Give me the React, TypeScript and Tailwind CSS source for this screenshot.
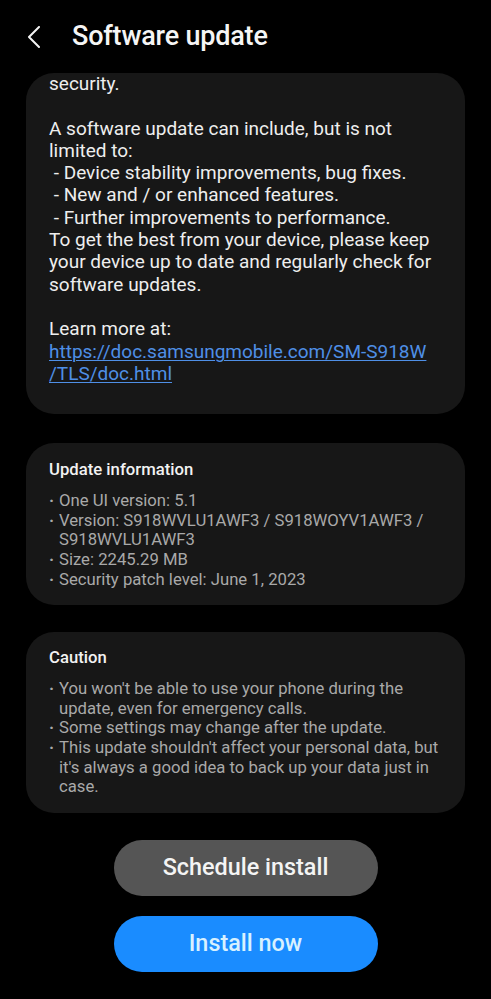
import React from 'react'

const descLines = [
  'security.',
  '',
  'A software update can include, but is not',
  'limited to:',
  ' - Device stability improvements, bug fixes.',
  ' - New and / or enhanced features.',
  ' - Further improvements to performance.',
  'To get the best from your device, please keep',
  'your device up to date and regularly check for',
  'software updates.',
  '',
  'Learn more at:',
]

const updateInfo = [
  'One UI version: 5.1',
  'Version: S918WVLU1AWF3 / S918WOYV1AWF3 / S918WVLU1AWF3',
  'Size: 2245.29 MB',
  'Security patch level: June 1, 2023',
]

const caution = [
  "You won't be able to use your phone during the update, even for emergency calls.",
  'Some settings may change after the update.',
  "This update shouldn't affect your personal data, but it's always a good idea to back up your data just in case.",
]

function Bullets({ items }: { items: string[] }) {
  return (
    <ul className="mt-[11px] text-[16.7px] leading-[19.6px] text-[#a9a9a9]">
      {items.map((t) => (
        <li key={t} className="flex">
          <span className="w-[10px] shrink-0 font-bold">·</span>
          <span>{t}</span>
        </li>
      ))}
    </ul>
  )
}

export default function App() {
  return (
    <div
      className="min-h-screen w-[491px] bg-black text-white"
      style={{ fontFamily: 'Roboto, "Noto Sans", sans-serif' }}
    >
      {/* Header */}
      <div className="flex h-[73px] items-center pl-[27px]">
        <svg width="14" height="22" viewBox="0 0 14 22" fill="none" stroke="#f2f2f2" strokeWidth={2}>
          <path d="M12 1 L2 11 L12 21" strokeLinecap="round" strokeLinejoin="round" />
        </svg>
        <h1 className="ml-[31px] text-[27px] font-medium tracking-[-0.2px] text-[#f5f5f5]">Software update</h1>
      </div>

      <div className="flex flex-col px-[26px]">
        {/* Description */}
        <div className="rounded-[28px] bg-[#171717] pl-[23px] pr-[10px] pt-0 pb-[29px] text-[19px] leading-[22.3px] text-[#eeeeee]">
          {descLines.map((l, i) => (
            <div key={i} className="whitespace-pre">{l || '\u00a0'}</div>
          ))}
          <div className="text-[#4f8fe6] underline decoration-1 underline-offset-2">
            https://doc.samsungmobile.com/SM-S918W
            <br />
            /TLS/doc.html
          </div>
        </div>

        {/* Update information */}
        <div className="mt-[29px] rounded-[28px] bg-[#171717] pl-[23px] pr-[30px] pt-[17px] pb-[16px]">
          <div className="text-[16.7px] font-medium leading-[20px] text-[#f2f2f2]">Update information</div>
          <Bullets items={updateInfo} />
        </div>

        {/* Caution */}
        <div className="mt-[27px] rounded-[28px] bg-[#171717] pl-[23px] pr-[16px] pt-[16px] pb-[16px]">
          <div className="text-[16.7px] font-medium leading-[20px] text-[#f2f2f2]">Caution</div>
          <Bullets items={caution} />
        </div>

        {/* Buttons */}
        <div className="mt-[27px] flex flex-col items-center gap-[20px]">
          <button className="h-[56px] w-[264px] rounded-full bg-[#555555] text-[23.4px] font-medium text-[#f4f4f4]">
            Schedule install
          </button>
          <button className="h-[56px] w-[264px] rounded-full bg-[#1a8cff] text-[23.4px] font-medium text-[#d8f1ff]">
            Install now
          </button>
        </div>
      </div>
    </div>
  )
}
